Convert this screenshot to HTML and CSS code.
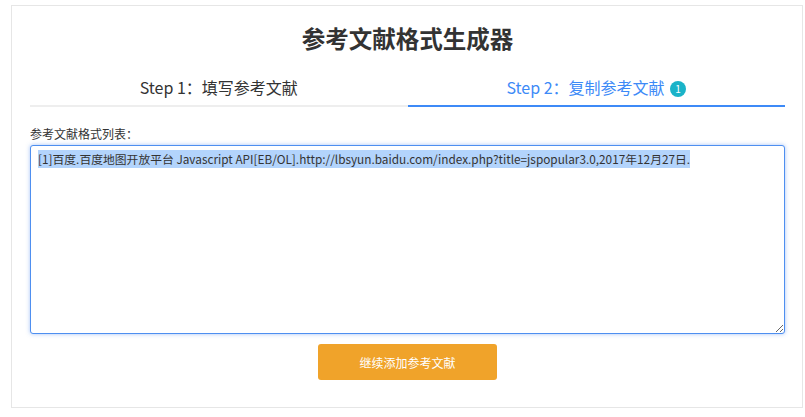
FILE: index.html
```html
<!DOCTYPE html>
<html>
<head>
  <meta charset="utf-8">
  <link rel="stylesheet" href="styles.css">
</head>
<body>

  <div class="card">
    <h1 class="title">参考文献格式生成器</h1>

    <div class="tabs">
      <div class="tab">Step 1：填写参考文献</div>
      <div class="tab active">Step 2：复制参考文献 <span class="badge">1</span></div>
    </div>

    <label class="list-label" for="ref-list">参考文献格式列表：</label>
    <textarea id="ref-list" class="ref-list">[1]百度.百度地图开放平台 Javascript API[EB/OL].http://lbsyun.baidu.com/index.php?title=jspopular3.0,2017年12月27日.</textarea>

    <div class="actions">
      <button class="add-btn">继续添加参考文献</button>
    </div>
  </div>

  <script>
    // select the generated list so it's ready to copy
    const list = document.getElementById('ref-list');
    list.focus();
    list.select();
  </script>

</body>
</html>
```

FILE: styles.css
```css
body { margin: 0; padding: 5px 2px 0 11px; background: #fff; font-family: "Noto Sans CJK SC", "Noto Sans", sans-serif; color: #333; }
.card { height: 401px; border: 1px solid #e6e6e6; padding: 0 17px 0 18px; }
.title { margin: 17px 0 0; font-size: 23.5px; line-height: 30px; font-weight: bold; text-align: center; color: #333; }
.tabs { display: flex; margin-top: 16px; }
.tab { flex: 1; text-align: center; font-size: 16px; line-height: 36px; color: #333; border-bottom: 2px solid #eee; }
.tab.active { color: #3d8af7; border-bottom-color: #3d8af7; }
.badge { display: inline-block; width: 16px; height: 16px; line-height: 16px; border-radius: 50%; background: #1ab3c8; color: #fff; font-size: 10px; text-align: center; vertical-align: 1px; margin-left: 2px; }
.list-label { display: block; margin-top: 19px; font-size: 12px; line-height: 16px; color: #333; }
.ref-list { display: block; box-sizing: border-box; width: 100%; height: 189px; margin-top: 3px; padding: 4px 7px; border: 1px solid #4e8ff0; border-radius: 3px; box-shadow: 0 0 4px rgba(80, 140, 240, 0.5); font-family: inherit; font-size: 11.8px; line-height: 18px; color: #333; outline: none; }
.ref-list::selection { background: #b3d4fc; }
.actions { display: flex; justify-content: center; margin-top: 10px; }
.add-btn { width: 179px; height: 36px; border: none; border-radius: 3px; background: #f0a32a; color: #fff; font-family: inherit; font-size: 12px; cursor: pointer; }
```
